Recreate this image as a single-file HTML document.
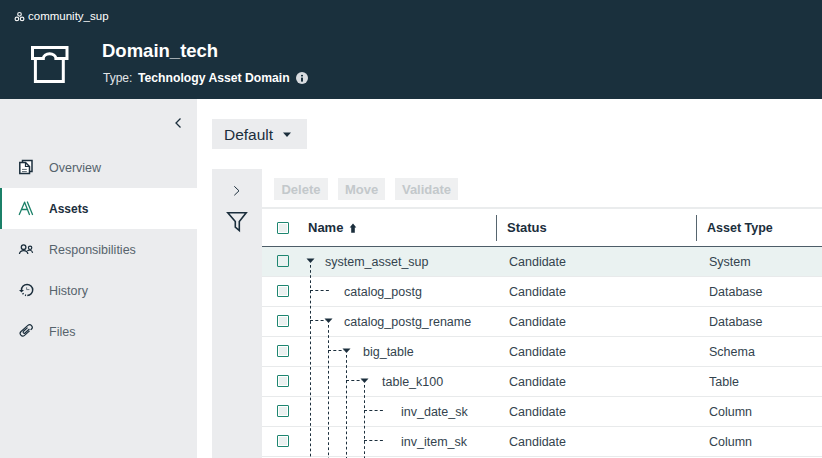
<!DOCTYPE html>
<html><head><meta charset="utf-8">
<style>
*{margin:0;padding:0;box-sizing:border-box}
html,body{width:822px;height:458px;overflow:hidden;background:#fff;font-family:"Liberation Sans",sans-serif;color:#1b2e3c}
.abs{position:absolute}
svg{position:absolute;overflow:visible}
#hdr{position:absolute;left:0;top:0;width:822px;height:99px;background:#1a303d}
#side{position:absolute;left:0;top:99px;width:197px;height:359px;background:#ebecee}
.nav{position:absolute;left:0;width:197px;height:41px}
.nav .t{position:absolute;left:49px;top:14px;font-size:12.5px;color:#56636c;white-space:nowrap}
.nav.act{background:#fff}
.nav.act .bar{position:absolute;left:0;top:0;width:2px;height:41px;background:#1b8068}
.nav.act .t{font-size:12px;font-weight:bold;color:#1b2e3c}
#dflt{position:absolute;left:212px;top:119px;width:95px;height:30px;background:#ebecee}
#fpanel{position:absolute;left:212px;top:169px;width:50px;height:289px;background:#ebecee}
.btn{position:absolute;top:178px;height:22px;padding-top:1px;background:#eff0f1;color:#c3c8cb;font-size:13px;font-weight:bold;text-align:center;line-height:22px}
#sep{position:absolute;left:262px;top:207px;width:560px;height:2px;background:#eaeced}
#thead{position:absolute;left:262px;top:209px;width:560px;height:38px;border-bottom:1px solid #4d5d68}
.th{position:absolute;top:11px;font-size:13px;font-weight:bold;color:#1b2e3c;white-space:nowrap}
.cdiv{position:absolute;top:6px;width:1px;height:26px;background:#56656f}
.row{position:absolute;left:262px;width:560px;height:30px;border-bottom:1px solid #e8eaeb}
.row.sel{background:#eaf2f1}
.cb{position:absolute;left:15px;top:8px;width:12px;height:12px;border:1px solid #1e8670;border-radius:1px;background:#ebf1f0;box-shadow:inset 0 0 0 1px #fff}
.sel .cb{box-shadow:none;background:#eaf2f1}
.td{position:absolute;top:8px;font-size:12.5px;color:#33434e;white-space:nowrap}
</style></head><body>
<div id="hdr">
  <svg style="left:0;top:0" width="40" height="30" viewBox="0 0 40 30">
    <g fill="none" stroke="#f2f3f4" stroke-width="1.2">
      <circle cx="19.5" cy="14.3" r="1.8"/><circle cx="16.9" cy="18.9" r="1.8"/><circle cx="22.1" cy="18.9" r="1.8"/>
    </g>
  </svg>
  <div class="abs" style="left:28px;top:10px;font-size:11.5px;color:#fff;white-space:nowrap">community_sup</div>
  <svg style="left:26px;top:40px" width="48" height="48" viewBox="0 0 48 48">
    <g fill="none" stroke="#fff" stroke-width="3" stroke-linejoin="miter">
      <path d="M6.5 18.5 V7.5 H41 V18.5 H29.9 A6.3 4.8 0 0 0 17.3 18.5 Z"/>
      <path d="M9.4 18.5 V41.5 H37.3 V18.5"/>
    </g>
  </svg>
  <div class="abs" style="left:102px;top:40px;font-size:18.5px;font-weight:bold;color:#fff;white-space:nowrap">Domain_tech</div>
  <div class="abs" style="left:103px;top:71px;font-size:12px;color:#e3e6e9;white-space:nowrap">Type:</div>
  <div class="abs" style="left:138px;top:71px;font-size:12.2px;font-weight:bold;color:#fff;white-space:nowrap">Technology Asset Domain</div>
  <svg style="left:296px;top:72px" width="12" height="12" viewBox="0 0 12 12">
    <circle cx="6" cy="6" r="6" fill="#d9dce0"/>
    <rect x="5" y="5.6" width="2" height="4" fill="#1a303d"/><rect x="5" y="2.9" width="2" height="1.5" fill="#1a303d"/>
  </svg>
</div>
<div id="side">
  <svg style="left:0;top:0" width="197" height="359" viewBox="0 99 197 359">
    <path d="M180.5 118.5 L176 123 L180.5 127.5" fill="none" stroke="#1b2e3c" stroke-width="1.3"/>
  </svg>
  <div class="nav" style="top:48px"><div class="t">Overview</div></div>
  <div class="nav act" style="top:89px"><div class="bar"></div><div class="t">Assets</div></div>
  <div class="nav" style="top:130px"><div class="t">Responsibilities</div></div>
  <div class="nav" style="top:171px"><div class="t">History</div></div>
  <div class="nav" style="top:212px"><div class="t">Files</div></div>
  <svg style="left:0;top:0" width="197" height="359" viewBox="0 99 197 359">
    <g fill="none" stroke="#1b2e3c" stroke-width="1.5">
      <!-- overview -->
      <rect x="22.5" y="160.5" width="9.5" height="11" fill="#fff"/>
      <path d="M19.8 162.5 H25.5 L29.5 166.5 V173.5 H19.8 Z" fill="#fff"/>
      <path d="M25.5 162.5 V166.5 H29.5" stroke-width="1.2"/>
      <path d="M22 169.4 H26.8 M22 171.6 H26.8" stroke-width="0.9" stroke="#4a5963"/>
      <!-- responsibilities -->
      <circle cx="23.6" cy="247.2" r="2.3" stroke-width="1.3"/>
      <path d="M19.4 254 A4.3 4 0 0 1 27.9 254" stroke-width="1.3"/>
      <circle cx="30.1" cy="247.8" r="1.7" stroke-width="1.2"/>
      <path d="M27.3 250.9 A3.2 3.2 0 0 1 32.6 252.8" stroke-width="1.2"/>
      <!-- history -->
      <path d="M21.5 290 A5.6 5.6 0 1 1 27.3 295.6" />
      <path d="M26 295.4 L25 295.1 M23.5 294.2 L22.6 293.2" stroke-width="1.6"/>
      <path d="M19 290 L24 290 L21.5 292.6 Z" fill="#1b2e3c" stroke="none"/>
      <path d="M26.6 287.3 V289.6 H29.4" stroke-width="1" stroke="#6a7780"/>
      <!-- files -->
      <g transform="translate(26.2 330.4) rotate(-42)">
        <path d="M2.2 2.6 H-4.6 A2.6 2.6 0 0 1 -4.6 -2.6 H4.6 A2.6 2.6 0 0 1 4.6 2.6 L3.6 2.6 M3.3 1.15 H-2.6 A1.15 1.15 0 0 1 -2.6 -1.15 H2.9" stroke-width="1.15"/>
      </g>
    </g>
    <!-- assets -->
    <g fill="none" stroke="#1b8068" stroke-width="1.3">
      <path d="M19.3 214.5 L24.6 202.2 L29.4 214.5 M21.7 209.5 H27.7 M27.4 202 L32.5 214.5" stroke-linejoin="round" stroke-linecap="round"/>
    </g>
  </svg>
</div>
<div id="dflt"><div class="abs" style="left:12px;top:7px;font-size:15.5px;color:#1b2e3c">Default</div>
  <svg style="left:0;top:0" width="95" height="30" viewBox="212 119 95 30"><path d="M283 132.5 H291 L287 137 Z" fill="#1b2e3c"/></svg>
</div>
<div id="fpanel">
  <svg style="left:0;top:0" width="50" height="289" viewBox="212 169 50 289">
    <path d="M234.3 186.3 L239 190.8 L234.3 195.3" fill="none" stroke="#1b2e3c" stroke-width="1"/>
    <path d="M227.8 212.7 H246.2 L239.3 221.5 V230.5 L235.3 227.2 V221.5 Z" fill="none" stroke="#1b2e3c" stroke-width="1.6" stroke-linejoin="miter"/>
  </svg>
</div>
<div class="btn" style="left:274px;width:54px">Delete</div>
<div class="btn" style="left:338px;width:47px">Move</div>
<div class="btn" style="left:395px;width:63px">Validate</div>
<div id="sep"></div>
<div id="thead">
  <div class="cb" style="top:13px;box-shadow:inset 0 0 0 1px #fff"></div>
  <div class="th" style="left:46px">Name</div>
  <svg style="left:0;top:0" width="560" height="38" viewBox="262 209 560 38"><path d="M353 223.6 L356.3 227.6 H354.8 V232.8 H351.2 V227.6 H349.7 Z" fill="#1b2e3c"/></svg>
  <div class="cdiv" style="left:234px"></div>
  <div class="th" style="left:245px">Status</div>
  <div class="cdiv" style="left:434px"></div>
  <div class="th" style="left:445px;top:12px;font-size:12.5px">Asset Type</div>
</div>
<div class="row sel" style="top:247px;height:30px"><div class="cb"></div><div class="td" style="left:63px">system_asset_sup</div><div class="td" style="left:247px">Candidate</div><div class="td" style="left:447px">System</div></div>
<div class="row" style="top:277px"><div class="cb"></div><div class="td" style="left:82px">catalog_postg</div><div class="td" style="left:247px">Candidate</div><div class="td" style="left:447px">Database</div></div>
<div class="row" style="top:307px"><div class="cb"></div><div class="td" style="left:82px">catalog_postg_rename</div><div class="td" style="left:247px">Candidate</div><div class="td" style="left:447px">Database</div></div>
<div class="row" style="top:337px"><div class="cb"></div><div class="td" style="left:101px">big_table</div><div class="td" style="left:247px">Candidate</div><div class="td" style="left:447px">Schema</div></div>
<div class="row" style="top:367px"><div class="cb"></div><div class="td" style="left:120px">table_k100</div><div class="td" style="left:247px">Candidate</div><div class="td" style="left:447px">Table</div></div>
<div class="row" style="top:397px"><div class="cb"></div><div class="td" style="left:139px">inv_date_sk</div><div class="td" style="left:247px">Candidate</div><div class="td" style="left:447px">Column</div></div>
<div class="row" style="top:427px"><div class="cb"></div><div class="td" style="left:139px">inv_item_sk</div><div class="td" style="left:247px">Candidate</div><div class="td" style="left:447px">Column</div></div>
<svg style="left:0;top:0" width="822" height="458" viewBox="0 0 822 458">
  <g fill="#1b2e3c">
    <path d="M306.5 258.5 H314.5 L310.5 263 Z"/>
    <path d="M324.5 318.5 H332.5 L328.5 323 Z"/>
    <path d="M342.5 348.5 H350.5 L346.5 353 Z"/>
    <path d="M360.5 378.5 H368.5 L364.5 383 Z"/>
  </g>
  <g fill="none" stroke="#1b2e3c" stroke-width="1">
    <g stroke-dasharray="2.7 2.4">
    <path d="M310.5 265 V458"/>
    <path d="M328.5 325 V458"/>
    <path d="M346.5 355 V458"/>
    <path d="M364.5 385 V458"/>
    </g>
    <g stroke-dasharray="3 2.3">
    <path d="M310 290.5 H330"/>
    <path d="M310 320.5 H326"/>
    <path d="M328 350.5 H344"/>
    <path d="M346 380.5 H362"/>
    <path d="M364 410.5 H384"/>
    <path d="M364 440.5 H384"/>
    </g>
  </g>
</svg>
</body></html>
